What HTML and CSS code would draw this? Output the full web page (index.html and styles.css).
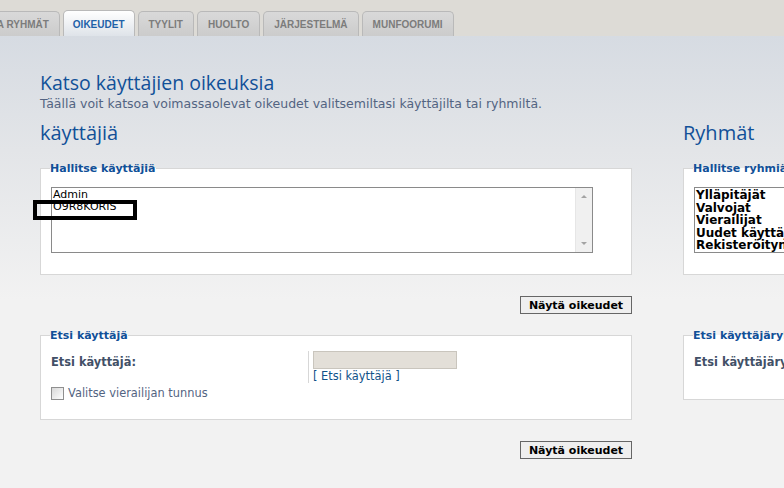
FILE: index.html
```html
<!DOCTYPE html>
<html lang="fi">
<head>
    <meta charset="UTF-8">
    <meta name="viewport" content="width=device-width, initial-scale=1.0">
    <title>Ylläpidon hallintapaneeli</title>
    <link rel="stylesheet" href="styles.css">
</head>
<body>
    <div class="tabBar">
        <ul class="tabs">
            <li class="tab">KÄYTTÄJÄT JA RYHMÄT</li>
            <li class="tab active">OIKEUDET</li>
            <li class="tab">TYYLIT</li>
            <li class="tab">HUOLTO</li>
            <li class="tab">JÄRJESTELMÄ</li>
            <li class="tab">MUNFOORUMI</li>
        </ul>
    </div>

    <div class="page">
        <h1>Katso käyttäjien oikeuksia</h1>
        <p class="intro">Täällä voit katsoa voimassaolevat oikeudet valitsemiltasi käyttäjilta tai ryhmiltä.</p>

        <div class="columns">
            <div class="column">
                <h2>käyttäjiä</h2>
                <fieldset class="box">
                    <legend>Hallitse käyttäjiä</legend>
                    <div class="listBox">
                        <ul class="listItems">
                            <li>Admin</li>
                            <li>O9R8KORIS</li>
                        </ul>
                        <div class="scroll">
                            <span class="arrow up"></span>
                            <span class="arrow down"></span>
                        </div>
                        <div class="markBox"></div>
                    </div>
                </fieldset>
                <div class="actions">
                    <button type="button" class="btn">Näytä oikeudet</button>
                </div>

                <fieldset class="box search">
                    <legend>Etsi käyttäjä</legend>
                    <div class="row">
                        <div class="label">Etsi käyttäjä:</div>
                        <div class="field">
                            <input type="text" class="textIn">
                            <a class="findLink">[ Etsi käyttäjä ]</a>
                        </div>
                    </div>
                    <label class="check"><input type="checkbox"> Valitse vierailijan tunnus</label>
                </fieldset>
                <div class="actions">
                    <button type="button" class="btn">Näytä oikeudet</button>
                </div>
            </div>

            <div class="column">
                <h2>Ryhmät</h2>
                <fieldset class="box">
                    <legend>Hallitse ryhmiä</legend>
                    <div class="listBox groups">
                        <ul class="listItems">
                            <li>Ylläpitäjät</li>
                            <li>Valvojat</li>
                            <li>Vierailijat</li>
                            <li>Uudet käyttäjät</li>
                            <li>Rekisteröityneet käyttäjät</li>
                        </ul>
                    </div>
                </fieldset>
                <div class="actions"></div>

                <fieldset class="box search short">
                    <legend>Etsi käyttäjäryhmä</legend>
                    <div class="row">
                        <div class="label">Etsi käyttäjäryhmä:</div>
                    </div>
                </fieldset>
            </div>
        </div>
    </div>
</body>
</html>
```

FILE: styles.css
```css
body {
    margin: 0;
    width: 784px;
    height: 488px;
    overflow: hidden;
    font-family: "DejaVu Sans", Verdana, sans-serif;
    background: linear-gradient(#d6dbe2 36px, #e3e5e8 150px, #f2f2f2 300px);
}

/* välilehdet */
.tabBar {
    height: 36px;
    background-color: #dddbd6;
    overflow: hidden;
}

.tabs {
    list-style: none;
    margin: 0 0 0 -82px;
    padding: 11px 0 0 0;
    display: flex;
    gap: 3px;
    white-space: nowrap;
}

.tab {
    height: 25px;
    line-height: 25px;
    padding: 0 10px;
    border: 1px solid #b9b9b9;
    border-bottom: none;
    border-radius: 5px 5px 0 0;
    background: linear-gradient(#d9d9d9, #cbcbcb);
    color: #7c7c7c;
    font-family: "Liberation Sans", Arial, sans-serif;
    font-size: 10px;
    font-weight: bold;
}

.tab.active {
    height: 26px;
    margin-top: -1px;
    padding: 0 9px;
    line-height: 27px;
    background: linear-gradient(#ffffff, #dde2e8);
    color: #1f61a8;
}

.page {
    padding: 34px 0 0 40px;
}

h1 {
    margin: 0;
    font-family: "Open Sans", "DejaVu Sans", sans-serif;
    font-weight: normal;
    font-size: 19.5px;
    line-height: 26px;
    color: #115098;
}

.intro {
    margin: 0;
    font-size: 12.5px;
    line-height: 15px;
    color: #536482;
}

h2 {
    margin: 0;
    font-family: "Open Sans", "DejaVu Sans", sans-serif;
    font-weight: normal;
    font-size: 20px;
    line-height: 26px;
    color: #115098;
}

.columns {
    display: flex;
    gap: 51px;
    padding-top: 9px;
}

.column {
    flex: 0 0 592px;
}

.box {
    margin: 16px 0 0 0;
    padding: 12px 38px 0 10px;
    border: 1px solid #d7d7d7;
    background-color: #ffffff;
    height: 113px;
    box-sizing: border-box;
    min-width: 0;
}

.box legend {
    padding: 0;
    margin-left: -1px;
    font-size: 11px;
    font-weight: bold;
    color: #115098;
}

.listBox {
    position: relative;
    height: 66px;
    border: 1px solid #8a8a8a;
    box-sizing: border-box;
    display: flex;
    background-color: #ffffff;
}

.listItems {
    list-style: none;
    margin: 0;
    padding: 1px 1px;
    flex: 1;
    font-size: 11px;
    line-height: 12px;
    color: #000000;
}

.groups .listItems {
    font-size: 12px;
    font-weight: bold;
    line-height: 12.6px;
    white-space: nowrap;
    overflow: hidden;
}

.scroll {
    width: 16px;
    background-color: #f0f0f0;
    border-left: 1px solid #e6e6e6;
    position: relative;
}

.arrow {
    position: absolute;
    left: 5px;
    width: 0;
    height: 0;
    border-left: 3px solid transparent;
    border-right: 3px solid transparent;
}

.arrow.up {
    top: 7px;
    border-bottom: 3px solid #a3a3a3;
}

.arrow.down {
    bottom: 7px;
    border-top: 3px solid #a3a3a3;
}

/* musta kehys nimen päällä */
.markBox {
    position: absolute;
    left: -19px;
    top: 12px;
    width: 96px;
    height: 12px;
    border: 4px solid #000000;
}

.actions {
    display: flex;
    justify-content: flex-end;
    padding-top: 21px;
    min-height: 18px;
}

.btn {
    width: 112px;
    height: 18px;
    padding: 0;
    border: 1px solid #666666;
    background-color: #efefef;
    font-family: "DejaVu Sans", Verdana, sans-serif;
    font-size: 11px;
    font-weight: bold;
    color: #000000;
}

.search {
    margin-top: 15px;
    height: 91px;
    padding-top: 9px;
}

.search.short {
    height: 71px;
}

.row {
    display: flex;
}

.label {
    width: 257px;
    padding-top: 4px;
    font-size: 11.4px;
    font-weight: bold;
    color: #425067;
    white-space: nowrap;
}

.field {
    border-left: 1px solid #d7d7d7;
    padding-left: 4px;
    height: 32px;
}

.textIn {
    display: block;
    width: 144px;
    height: 18px;
    box-sizing: border-box;
    margin: 0;
    border: 1px solid #c9c5bd;
    background-color: #e3dfd8;
}

.findLink {
    display: block;
    font-size: 11.4px;
    line-height: 14px;
    color: #105289;
}

.check {
    display: flex;
    align-items: center;
    gap: 4px;
    margin-top: 3px;
    font-size: 11.4px;
    color: #536482;
}

.check input {
    appearance: none;
    margin: 0;
    width: 13px;
    height: 13px;
    border: 1px solid #8f8f8f;
    background: linear-gradient(135deg, #d8d8d8, #ffffff);
}
```
